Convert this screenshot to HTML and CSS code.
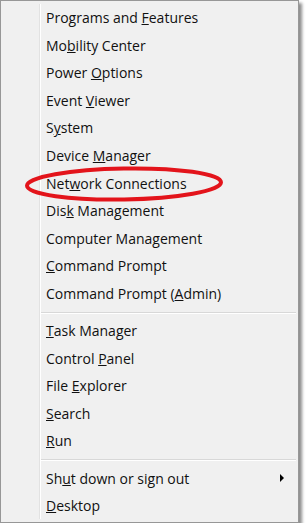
FILE: index.html
```html
<!DOCTYPE html>
<html lang="en">

<head>
    <meta charset="UTF-8">
    <title>Power User Menu</title>
    <link rel="stylesheet" href="styles.css">
</head>

<body>
    <div class="menu">
        <ul class="items">
            <li>Programs and <u>F</u>eatures</li>
            <li>Mo<u>b</u>ility Center</li>
            <li>Power <u>O</u>ptions</li>
            <li>Event <u>V</u>iewer</li>
            <li>S<u>y</u>stem</li>
            <li>Device <u>M</u>anager</li>
            <li>Net<u>w</u>ork Connections</li>
            <li>Dis<u>k</u> Management</li>
            <li>Computer Mana<u>g</u>ement</li>
            <li><u>C</u>ommand Prompt</li>
            <li>Command Prompt (<u>A</u>dmin)</li>
            <li class="sep"></li>
            <li><u>T</u>ask Manager</li>
            <li>Control <u>P</u>anel</li>
            <li>File <u>E</u>xplorer</li>
            <li><u>S</u>earch</li>
            <li><u>R</u>un</li>
            <li class="sep"></li>
            <li class="sub"><span>Sh<u>u</u>t down or sign out</span><span class="arrow"></span></li>
            <li><u>D</u>esktop</li>
        </ul>

        <!-- hand-drawn highlight -->
        <svg class="circle" width="306" height="530" viewBox="0 0 306 530">
            <ellipse cx="124" cy="184" rx="97" ry="15.5" fill="none" stroke="#e3141b" stroke-width="4" transform="rotate(-1 124 184)" />
        </svg>
    </div>
</body>

</html>
```

FILE: styles.css
```css
* {
    box-sizing: border-box;
}

body {
    margin: 0;
    background-color: #fff;
    font-family: "Open Sans", "Noto Sans", Arial, sans-serif;
}

.menu {
    position: relative;
    width: 299px;
    height: 523px;
    background-color: #f0f0f0;
    border: 1px solid #979797;
    box-shadow: 3px 3px 3px rgba(0, 0, 0, 0.45);
    padding: 3px 0 3px 38px;
}

.items {
    list-style: none;
    margin: 0;
    padding: 0;
    height: 100%;
    border-left: 1px solid #e2e2e2;
    box-shadow: inset 1px 0 0 #fff;
}

.items li {
    height: 27.6px;
    line-height: 27.6px;
    padding-left: 6px;
    font-size: 14px;
    color: #111;
    white-space: nowrap;
}

.items li.sep {
    height: 9.5px;
    padding: 0;
    margin-left: 1px;
    margin-right: 2px;
    background: linear-gradient(#d8d8d8, #d8d8d8) 0 4px / 100% 1px no-repeat,
        linear-gradient(#fff, #fff) 0 5px / 100% 1px no-repeat;
}

.items li.sub {
    display: flex;
    justify-content: space-between;
    align-items: center;
    padding-right: 14px;
}

.arrow {
    width: 0;
    height: 0;
    border-top: 4px solid transparent;
    border-bottom: 4px solid transparent;
    border-left: 4px solid #000;
}

.circle {
    position: absolute;
    left: -1px;
    top: -1px;
    pointer-events: none;
}
```
